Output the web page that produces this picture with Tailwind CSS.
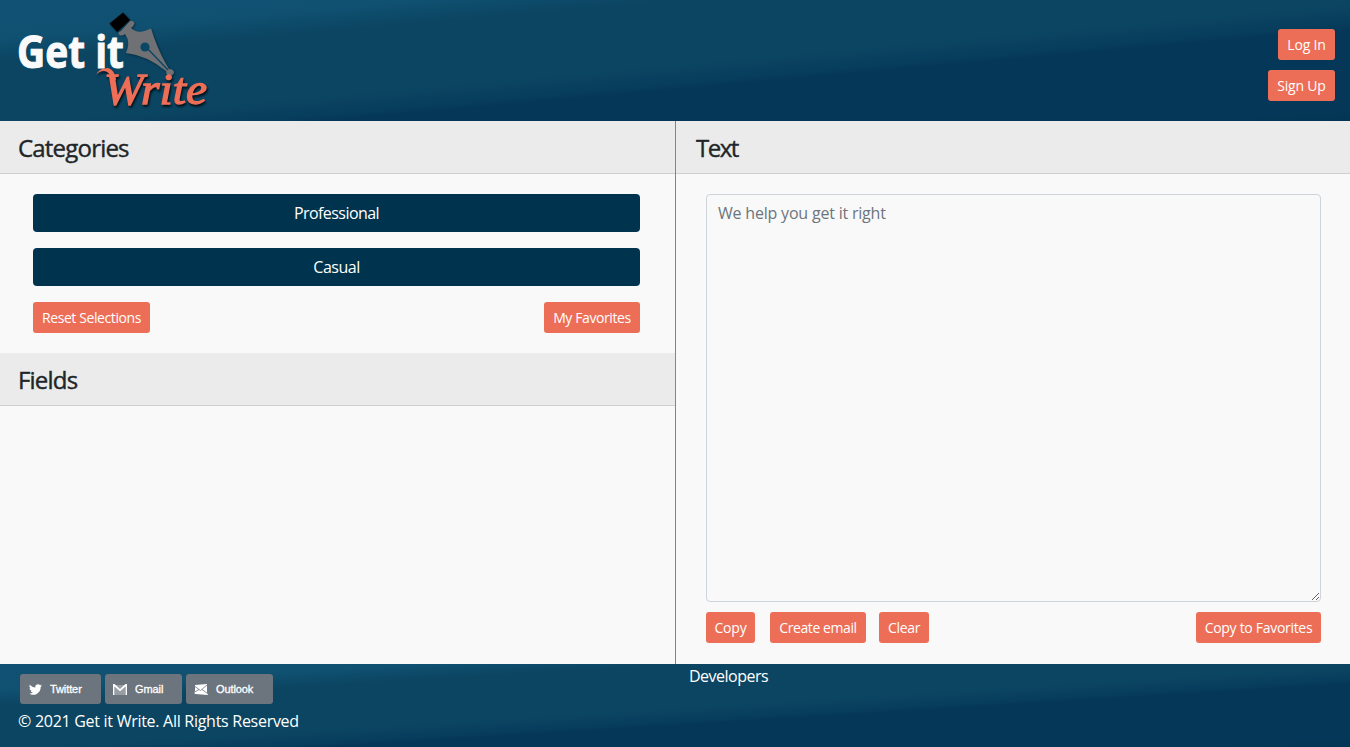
<!DOCTYPE html>
<html lang="en"><head><meta charset="utf-8"><title>Get it Write</title>
<script src="https://cdn.jsdelivr.net/npm/@tailwindcss/browser@4"></script></head>
<body class="flex h-screen flex-col overflow-hidden bg-[#f9f9f9] font-['Open_Sans','Noto_Sans',sans-serif] text-base text-[#212529]">
<header class="flex h-[121px] shrink-0 justify-between bg-[linear-gradient(to_bottom_right,#115173_0%,#105071_16%,#0b4562_25%,#0b4562_52%,#0a405f_56%,#083e5d_59%,#053858_62%,#053858_94%,#033453_100%)] pr-[15px]">
  <svg width="220" height="121" viewBox="0 0 220 121" aria-label="Get it Write">
    <g class="drop-shadow-[1px_1px_1px_rgba(0,0,0,0.4)]">
      <path d="M109.500 23.500 123 12.500 130 20 117 32Z" fill="#000"/>
      <path d="M130 21Q133 20 134.500 23Q134 26 131 28Q138 35 151 28.500Q157 48 166 64L169 69Q174 69 174 73Q172 77 168 75Q166 74 166 71Q146 55 126 53Q131 42 125 34Q121 37 118.500 34Q118 32 121 31Z" fill="#707175"/>
      <circle cx="145" cy="47" r="4.600" fill="#0c4766"/>
      <path d="M146 47 168 70" stroke="#0c4766" stroke-width="1.500"/>
    </g>
    <text x="17" y="68" textLength="107" lengthAdjust="spacingAndGlyphs" font-family="Open Sans" font-weight="700" font-size="45" fill="#fafafa" stroke="#fafafa" stroke-width="1">Get it</text>
    <g class="drop-shadow-[1px_2px_1px_rgba(0,0,0,0.8)]" fill="#ee6e57">
      <path d="M96 75Q99 68 108 68Q115 70 116 80L112 82Q110 71 104 71Q99 71 96 75Z"/>
      <text x="104" y="103.500" textLength="103" lengthAdjust="spacingAndGlyphs" font-family="Liberation Serif" font-style="italic" font-size="44" stroke="#ee6e57" stroke-width="1.300">Write</text>
    </g>
  </svg>
  <div class="flex flex-col items-end gap-2.5 pt-[29px] text-sm text-white">
    <button class="h-[31px] w-[57px] rounded-[3px] bg-[#ec6e57] tracking-[-0.2px]">Log In</button>
    <button class="h-[31px] w-[67px] rounded-[3px] bg-[#ec6e57] tracking-[-0.2px]">Sign Up</button>
  </div>
</header>
<main class="flex h-[543px] shrink-0">
  <section class="w-[676px] border-r border-[#7b8794]">
    <h2 class="flex h-[53px] items-center border-b border-[#ced0d2] bg-[#ebebeb] pl-[18px] pt-0.5 text-2xl font-medium tracking-[-0.8px] [-webkit-text-stroke:0.4px_#212529]">Categories</h2>
    <div class="flex flex-col gap-4 pl-[33px] pr-[35px] pt-5 text-white">
      <button class="h-[38px] rounded bg-[#00334e] tracking-[-0.55px]">Professional</button>
      <button class="h-[38px] rounded bg-[#00334e] tracking-[-0.5px]">Casual</button>
      <div class="flex justify-between text-sm">
        <button class="h-[31px] w-[117px] whitespace-nowrap rounded-[3px] bg-[#ec6e57] tracking-[-0.4px]">Reset Selections</button>
        <button class="h-[31px] w-24 whitespace-nowrap rounded-[3px] bg-[#ec6e57] tracking-[-0.4px]">My Favorites</button>
      </div>
    </div>
    <h2 class="mt-5 flex h-[53px] items-center border-b border-[#ced0d2] bg-[#ebebeb] pl-[18px] pt-0.5 text-2xl font-medium tracking-[-0.8px] [-webkit-text-stroke:0.4px_#212529]">Fields</h2>
  </section>
  <section class="flex-1">
    <h2 class="flex h-[53px] items-center border-b border-[#ced0d2] bg-[#ebebeb] pl-5 pt-0.5 text-2xl font-medium tracking-[-1.5px] [-webkit-text-stroke:0.4px_#212529]">Text</h2>
    <div class="pl-[30px] pr-[29px] pt-5">
      <textarea class="block h-[408px] w-full resize rounded border border-[#ced4da] pl-[11px] pr-3 py-1.5 tracking-[-0.2px] placeholder:text-[#6c757d]" placeholder="We help you get it right"></textarea>
      <div class="mt-2.5 flex text-sm text-white">
        <button class="h-[31px] w-[49px] rounded-[3px] bg-[#ec6e57] tracking-[-0.2px]">Copy</button>
        <button class="ml-[15px] h-[31px] w-24 whitespace-nowrap rounded-[3px] bg-[#ec6e57] tracking-[-0.4px]">Create email</button>
        <button class="ml-[13px] h-[31px] w-[50px] rounded-[3px] bg-[#ec6e57] tracking-[-0.3px]">Clear</button>
        <button class="ml-auto h-[31px] w-[125px] whitespace-nowrap rounded-[3px] bg-[#ec6e57] tracking-[-0.3px]">Copy to Favorites</button>
      </div>
    </div>
  </section>
</main>
<footer class="flex h-[83px] shrink-0 bg-[linear-gradient(to_bottom_right,#115173_0%,#105071_16%,#0b4562_25%,#0b4562_52%,#0a405f_56%,#083e5d_59%,#053858_62%,#053858_94%,#033453_100%)] text-white">
  <div class="w-[689px] pl-[18px] pt-2.5">
    <div class="flex gap-1 pl-0.5 font-['Liberation_Sans'] text-[11px] font-medium tracking-[-0.1px] [-webkit-text-stroke:0.3px_#fff]">
      <a class="flex h-[30px] w-[81px] items-center rounded-[3px] bg-[#6c757d] pl-[9px]"><svg class="mr-2 h-[13px] w-[13px]" viewBox="0 0 24 24" fill="#fff"><path d="M23.950 4.570a10 10 0 0 1-2.820.770 4.960 4.960 0 0 0 2.160-2.720 9.900 9.900 0 0 1-3.120 1.180 4.920 4.920 0 0 0-8.380 4.480C7.690 8.100 4.070 6.130 1.640 3.160a4.920 4.920 0 0 0 1.520 6.570 4.900 4.900 0 0 1-2.230-.610v.060a4.920 4.920 0 0 0 3.950 4.830 5 5 0 0 1-2.210.080 4.940 4.940 0 0 0 4.600 3.420A9.870 9.870 0 0 1 0 19.540a14 14 0 0 0 7.550 2.210c9.050 0 14-7.500 14-13.980 0-.210 0-.420-.020-.630a9.940 9.940 0 0 0 2.420-2.570z"/></svg>Twitter</a>
      <a class="flex h-[30px] w-[77px] items-center rounded-[3px] bg-[#6c757d] pl-2"><svg class="mr-2 h-[11px] w-3.5" viewBox="0 0 14 11"><path d="M2 1h10v10H2z" fill="#fff" opacity=".3"/><path d="M0 0H1.500L7 5 12.500 0H14V11H12.500V2.500L7 7.200 1.500 2.500V11H0Z" fill="#fff"/></svg>Gmail</a>
      <a class="flex h-[30px] w-[87px] items-center rounded-[3px] bg-[#6c757d] pl-2"><svg class="mr-2 h-[11px] w-3.5" viewBox="0 0 14 11"><path d="M1 1 13 0V8.500L14 11 1.500 10 0 9 1 7Z" fill="#fff"/><path d="M1 2.500 6.500 6.500 13 1M0 8.500 5 5.500M8 5.500l5.500 4" stroke="#6c757d" fill="none" stroke-width=".8"/></svg>Outlook</a>
    </div>
    <p class="mt-[5px] tracking-[-0.28px]">© 2021 Get it Write. All Rights Reserved</p>
  </div>
  <p class="tracking-[-0.5px]">Developers</p>
</footer>
</body></html>
